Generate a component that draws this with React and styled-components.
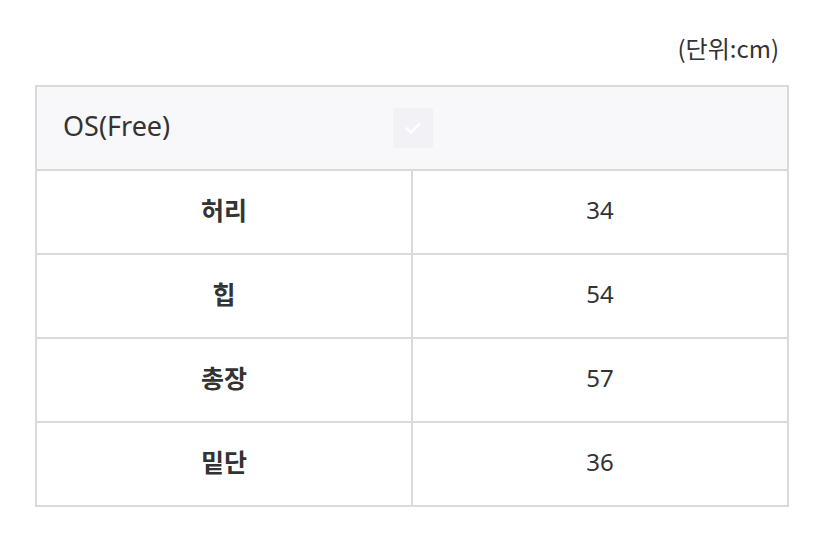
import React from 'react'
import styled, { createGlobalStyle } from 'styled-components'

const GlobalStyle = createGlobalStyle`
    body {
        margin: 0;
        background: #fff;
        font-family: "Noto Sans CJK KR", "Noto Sans", sans-serif;
        color: #333;
    }
`

const rows = [
    { label: '허리', value: '34' },
    { label: '힙', value: '54' },
    { label: '총장', value: '57' },
    { label: '밑단', value: '36' },
]

function App() {
    return (
        <Wrapper>
            <GlobalStyle />
            <Unit>(단위:cm)</Unit>
            <SizeTable>
                <tbody>
                    <tr>
                        <HeadCell colSpan={2}>
                            <HeadInner>
                                <HeadLabel>OS(Free)</HeadLabel>
                                <CheckBox>
                                    <svg width="22" height="22" viewBox="0 0 24 24" fill="none">
                                        <path d="M5 12.5l4.5 4.5L19 7.5" stroke="#fff" strokeWidth="3" strokeLinecap="round" strokeLinejoin="round" />
                                    </svg>
                                </CheckBox>
                            </HeadInner>
                        </HeadCell>
                    </tr>
                    {rows.map((row) => (
                        <tr key={row.label}>
                            <LabelCell>{row.label}</LabelCell>
                            <ValueCell>{row.value}</ValueCell>
                        </tr>
                    ))}
                </tbody>
            </SizeTable>
        </Wrapper>
    )
}

export default App

const Wrapper = styled.div`
    width: 824px;
    padding: 33px 0 0 35px;
    box-sizing: border-box;
`
const Unit = styled.div`
    width: 744px;
    text-align: right;
    font-size: 24px;
    line-height: 30px;
    margin-bottom: 22px;
    color: #333;
`
const SizeTable = styled.table`
    width: 754px;
    border-collapse: collapse;
    table-layout: fixed;
    td {
        border: 2px solid #dadada;
        height: 84px;
        padding: 0 0 6px;
        box-sizing: border-box;
    }
`
const HeadCell = styled.td`
    background: #f8f8fa;
`
const HeadInner = styled.div`
    display: flex;
    align-items: center;
    padding-left: 26px;
`
const HeadLabel = styled.span`
    width: 330px;
    font-size: 27px;
    color: #333;
    font-family: "Noto Sans", "Noto Sans CJK KR", sans-serif;
`
const CheckBox = styled.span`
    width: 40px;
    height: 40px;
    margin-top: 6px;
    background: #f1f1f6;
    display: flex;
    align-items: center;
    justify-content: center;
    opacity: 0.9;
`
const LabelCell = styled.td`
    text-align: center;
    font-size: 25px;
    font-weight: 700;
    color: #333;
`
const ValueCell = styled.td`
    text-align: center;
    font-size: 24px;
    color: #333;
    font-family: "Noto Sans", "Noto Sans CJK KR", sans-serif;
`
